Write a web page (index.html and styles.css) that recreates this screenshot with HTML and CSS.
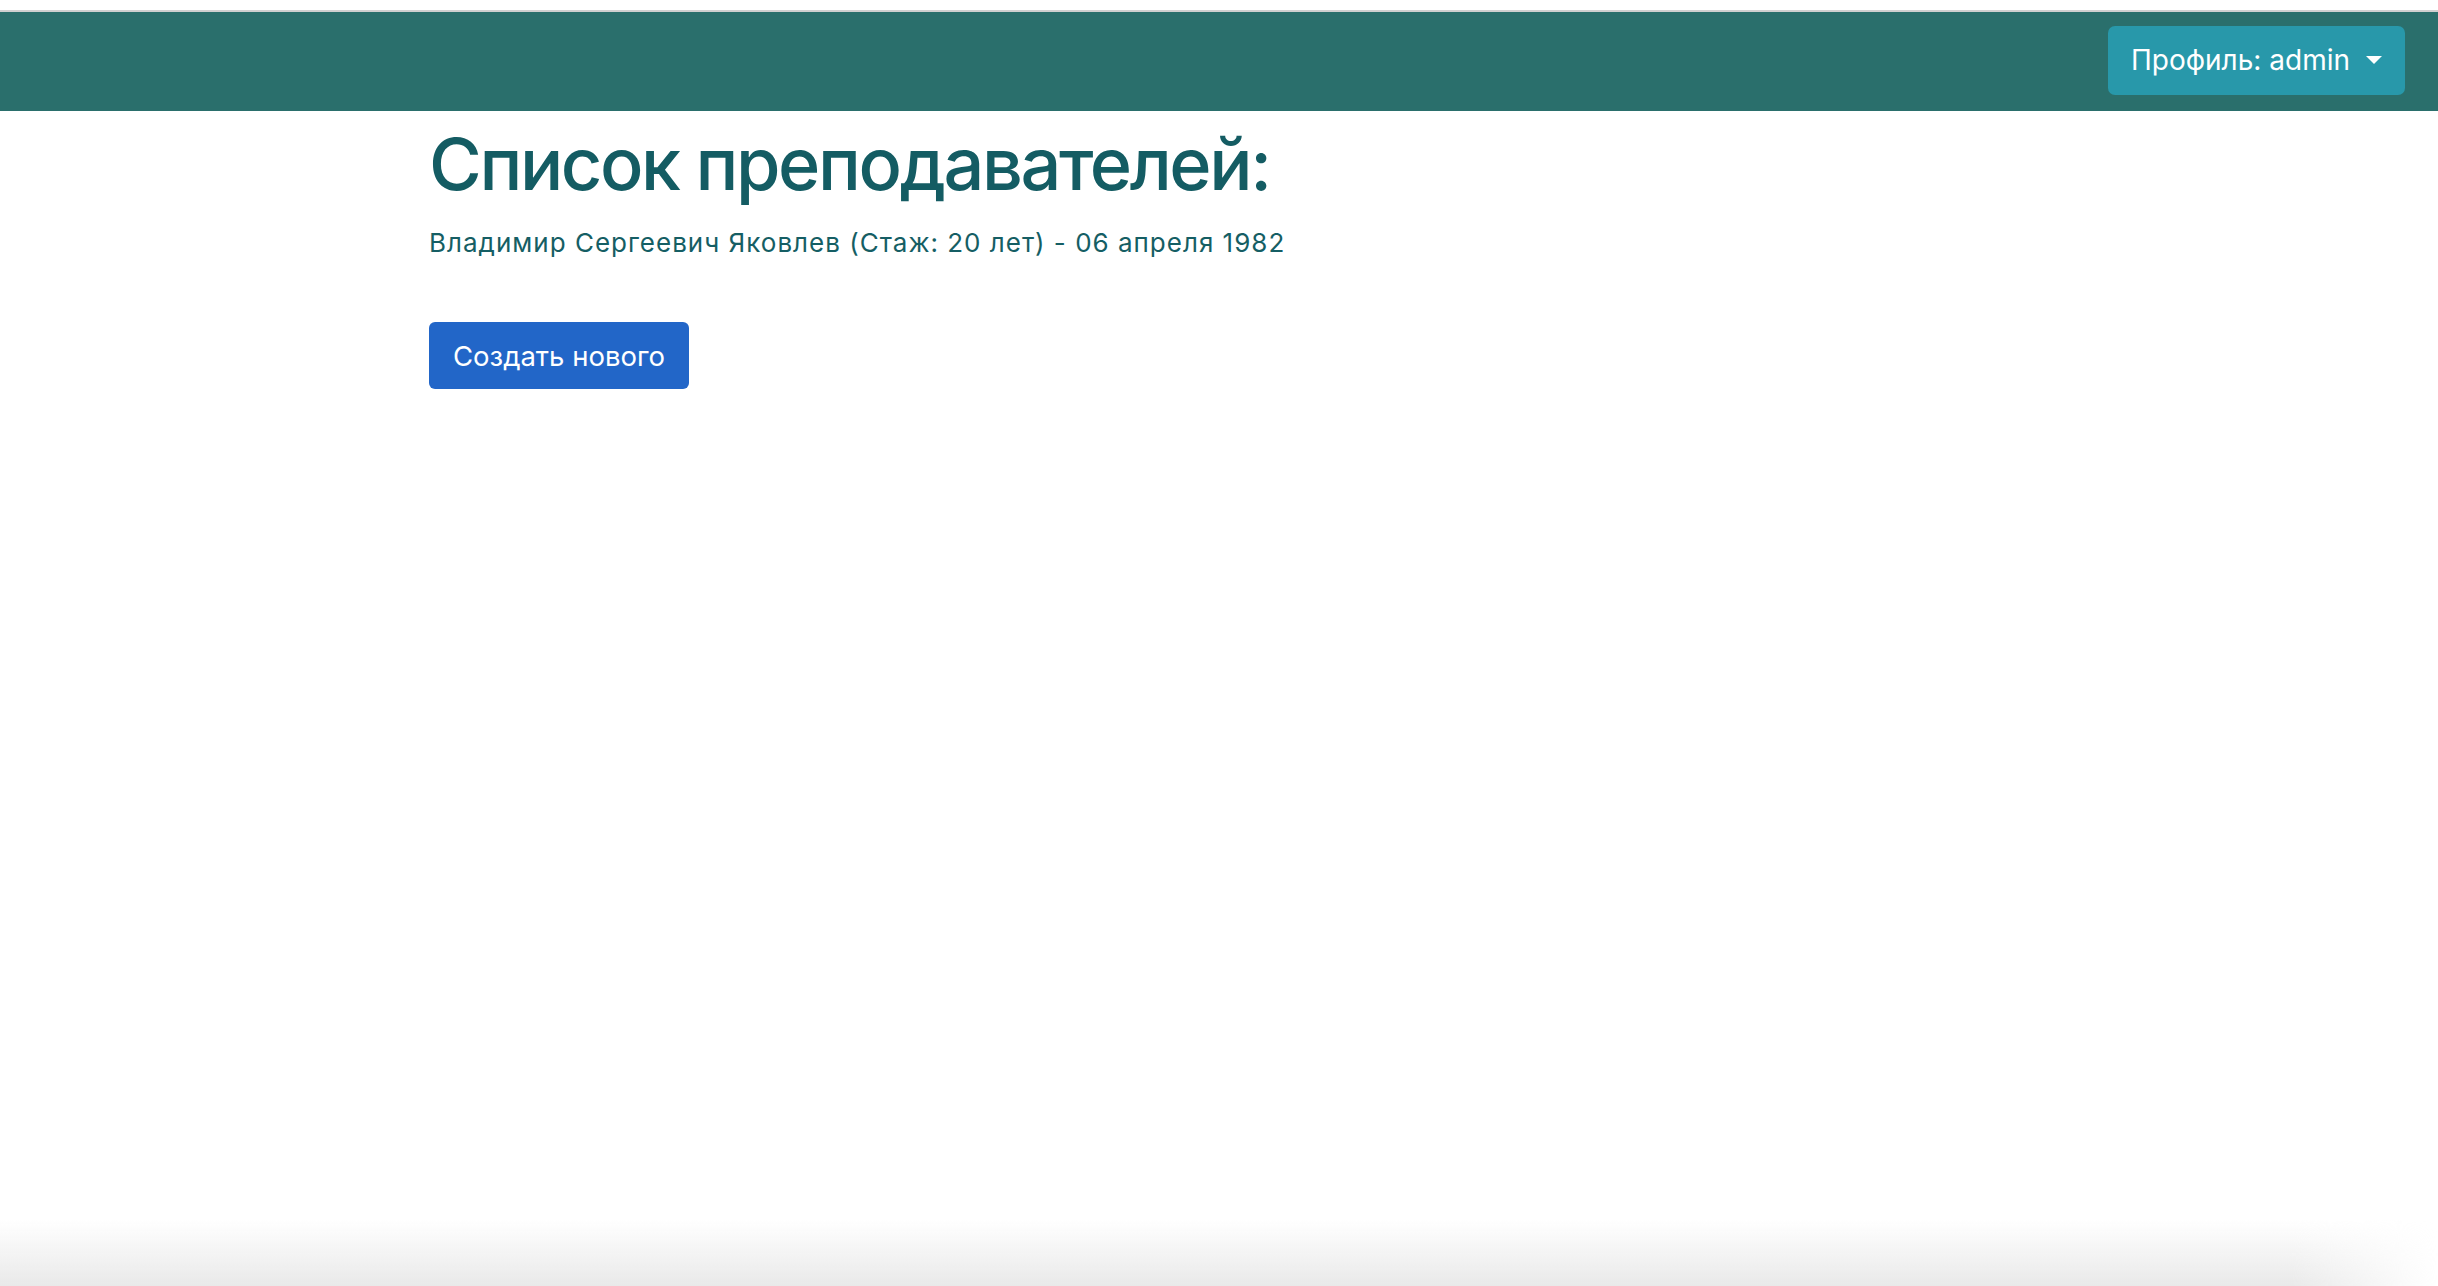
FILE: index.html
```html
<!DOCTYPE html>
<html lang="ru">
<head>
<meta charset="utf-8">
<title>Список преподавателей</title>
<link rel="stylesheet" href="styles.css">
</head>
<body>
<div class="chrome"></div>
<nav class="navbar">
  <button class="profile-btn" type="button">Профиль: admin<span class="caret"></span></button>
</nav>
<main class="container">
  <h1 class="title">Список преподавателей:</h1>
  <p class="teacher">Владимир Сергеевич Яковлев (Стаж: 20 лет) - 06 апреля 1982</p>
  <button class="create-btn" type="button">Создать нового</button>
</main>
<div class="shade"></div>
</body>
</html>
```
FILE: styles.css
```css
* { box-sizing: border-box; }
html, body { margin: 0; padding: 0; }
body {
  min-height: 100vh;
  display: flex;
  flex-direction: column;
  background: #ffffff;
  font-family: Inter, "Noto Sans", "Liberation Sans", sans-serif;
}
.chrome {
  height: 12px;
  border-bottom: 2px solid #d0d0d0;
  background: #ffffff;
}
.navbar {
  height: 99px;
  background: #2a6f6c;
  display: flex;
  justify-content: flex-end;
  align-items: center;
  padding-right: 33px;
}
.profile-btn {
  height: 69px;
  width: 297px;
  margin-bottom: 2px;
  border: none;
  border-radius: 7px;
  background: #2898aa;
  color: #ffffff;
  font-family: inherit;
  font-size: 28px;
  display: flex;
  align-items: center;
  justify-content: center;
  gap: 16px;
  padding: 0 0 2px;
}
.caret {
  width: 0;
  height: 0;
  border-left: 8px solid transparent;
  border-right: 8px solid transparent;
  border-top: 8px solid #ffffff;
}
.container {
  padding-left: 429px;
}
.title {
  margin: 10px 0 0;
  font-size: 72px;
  line-height: 1.2;
  font-weight: 500;
  letter-spacing: -2.4px;
  color: #145c63;
}
.teacher {
  margin: 16px 0 0;
  font-size: 26px;
  line-height: 1.5;
  letter-spacing: 1px;
  color: #155e64;
}
.create-btn {
  margin-top: 60px;
  height: 67px;
  width: 260px;
  border: none;
  border-radius: 6px;
  background: #2266c8;
  color: #ffffff;
  font-family: inherit;
  font-size: 27.5px;
}
.shade {
  margin-top: auto;
  height: 66px;
  background: linear-gradient(to bottom, rgba(233,233,233,0) 0%, #e9e9e9 100%);
  -webkit-mask-image: linear-gradient(to right, #000 94%, transparent 100%);
  mask-image: linear-gradient(to right, #000 94%, transparent 100%);
}
```
